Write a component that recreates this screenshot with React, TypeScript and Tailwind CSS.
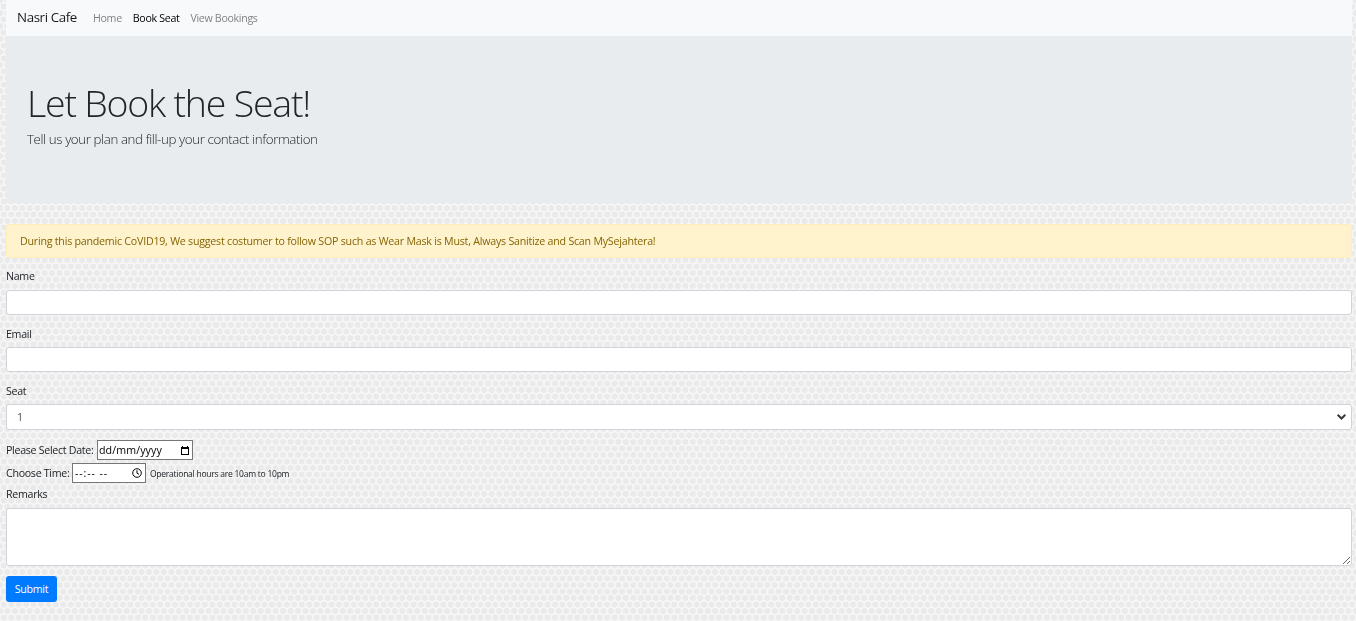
import type { ReactNode } from "react";

const NAV_LINKS = [
  { label: "Home", active: false },
  { label: "Book Seat", active: true },
  { label: "View Bookings", active: false },
];

function HexBackground() {
  return (
    <svg className="fixed inset-0 -z-10 h-full w-full" aria-hidden="true">
      <defs>
        <pattern id="hex" width="7.45" height="13" patternUnits="userSpaceOnUse">
          <rect width="7.45" height="13" fill="#eaeaea" />
          <path
            d="M3.72 0V2.2L0 4.4V8.6L3.72 10.8V13M3.72 2.2L7.45 4.4V8.6L3.72 10.8M7.45 4.4V8.6"
            fill="none"
            stroke="#f8f8f8"
            strokeWidth="1.5"
          />
        </pattern>
      </defs>
      <rect width="100%" height="100%" fill="url(#hex)" />
    </svg>
  );
}

function Label({ children, className }: { children: ReactNode; className: string }) {
  return <label className={`block h-4 leading-4 ${className}`}>{children}</label>;
}

function Navbar() {
  return (
    <nav className="flex h-9 items-center bg-[#f8f9fa] pl-[11px]">
      <a className="w-[76px] text-[13.33px] tracking-[-0.4px] text-black/90">Nasri Cafe</a>
      <div className="flex gap-[11px] tracking-[-0.33px]">
        {NAV_LINKS.map((link) => (
          <a key={link.label} className={link.active ? "text-black" : "text-black/50"}>
            {link.label}
          </a>
        ))}
      </div>
    </nav>
  );
}

export default function App() {
  return (
    <div className="relative isolate h-[621px] overflow-hidden pr-1 pl-1.5 font-['Open_Sans','Noto_Sans',sans-serif] text-[10.67px] text-[#212529]">
      <HexBackground />
      <Navbar />

      <header className="h-[167px] bg-[#e9ecef] pt-[43px] pl-[21px]">
        <h1 className="h-[50px] text-[37.5px] leading-[48px] font-light tracking-[-1.22px] whitespace-nowrap">
          Let Book the Seat!
        </h1>
        <p className="h-5 text-[13.33px] leading-[20px] font-light tracking-[-0.4px]">
          Tell us your plan and fill-up your contact information
        </p>
      </header>

      <div className="mt-[21px] flex h-[34px] items-center rounded-[3px] border border-[#ffeeba] bg-[#fff3cd] pl-[13px] tracking-[-0.23px] text-[#856404]">
        During this pandemic CoVID19, We suggest costumer to follow SOP such as Wear Mask is Must, Always Sanitize and Scan MySejahtera!
      </div>

      <form className="flex flex-col tracking-[-0.3px]">
        <Label className="mt-[10px]">Name</Label>
        <input className="mt-1.5 h-[25px] rounded-[3px] border border-[#ced4da] bg-white px-2 outline-none" />

        <Label className="mt-[11px]">Email</Label>
        <input className="mt-[5px] h-[25px] rounded-[3px] border border-[#ced4da] bg-white px-2 outline-none" />

        <Label className="mt-[11px]">Seat</Label>
        <div className="mt-[5px] flex h-[26px] items-center justify-between rounded-[3px] border border-[#ced4da] bg-white pr-[5px] pl-2.5 text-[#495057]">
          <span>1</span>
          <svg width="9" height="6" viewBox="0 0 9 6" fill="none" stroke="#343a40" strokeWidth="2">
            <path d="M0.7 0.8L4.5 4.5L8.3 0.8" />
          </svg>
        </div>

        <div className="mt-2.5 flex h-5 items-center">
          <span className="w-[91px] whitespace-nowrap">Please Select Date:</span>
          <span className="flex h-5 w-24 items-center justify-between border border-[#767676] bg-white pr-[3px] pl-px text-black">
            <span className="tracking-[0.1px]">dd/mm/yyyy</span>
            <svg width="8" height="9" viewBox="0 0 8 9" fill="black">
              <path d="M1 1V0h1v1h4V0h1v1h1v8H0V1zM1 3v5h6V3z" fillRule="evenodd" />
            </svg>
          </span>
        </div>

        <div className="mt-[3px] flex h-5 items-center">
          <span className="w-[66px] whitespace-nowrap">Choose Time:</span>
          <span className="flex h-5 w-[74px] items-center justify-between border border-[#767676] bg-white pr-[3px] pl-0.5 text-black">
            <span className="tracking-[0.85px]">--:-- --</span>
            <svg width="10" height="10" viewBox="0 0 10 10" fill="none" stroke="black">
              <circle cx="5" cy="5" r="4.3" />
              <path d="M5 2.2V5.2L7 6.4" />
            </svg>
          </span>
          <small className="mt-0.5 ml-1 text-[8.53px] tracking-[-0.25px]">Operational hours are 10am to 10pm</small>
        </div>

        <Label className="mt-[3px]">Remarks</Label>
        <textarea className="mt-1.5 h-[58px] resize-y rounded-[3px] border border-[#ced4da] bg-white px-2 outline-none" />

        <button type="button" className="mt-2.5 h-[26px] w-[51px] rounded-[3px] bg-[#007bff] text-white">
          Submit
        </button>
      </form>
    </div>
  );
}
